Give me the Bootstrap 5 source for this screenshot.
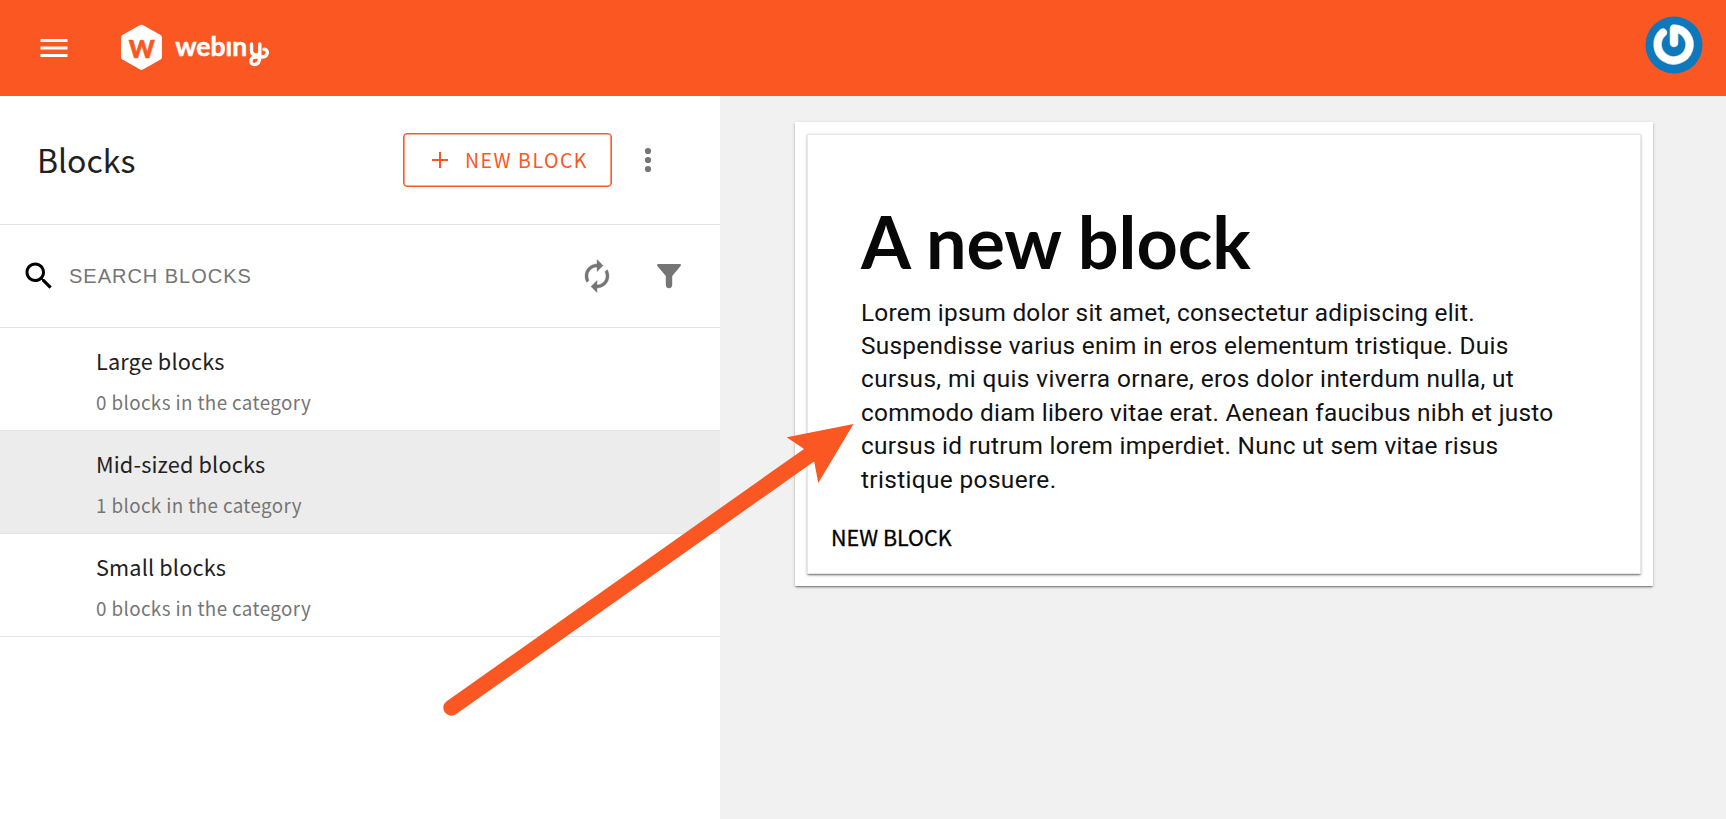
<!DOCTYPE html>
<html lang="en">
<head>
<meta charset="utf-8">
<title>Blocks</title>
<link href="https://cdn.jsdelivr.net/npm/bootstrap@5.3.0/dist/css/bootstrap.min.css" rel="stylesheet">
<style>
:root { --brand: #fa5723; }
body { font-family: "Noto Sans CJK SC", sans-serif; color: #222; overflow: hidden; }
svg { display: block; flex: none; }
.topbar { height: 96px; background: var(--brand); padding: 0 23px 0 36px; }
.brandmark { margin: -3px 0 0 48px; }
.avatar { margin-top: -6px; }
.sidebar { width: 720px; }
.line { border-bottom: 1px solid #e3e3e3; }
.side-head { height: 129px; padding: 0 54px 0 37px; }
.side-head h1 { font-size: 32px; line-height: 40px; color: #212121; padding-bottom: 2px; }
.btn-new { width: 209px; height: 54px; border: 1px solid var(--brand); box-shadow: inset 0 0 0 .6px var(--brand); border-radius: 4px; color: var(--brand); font-size: 19.5px; letter-spacing: 1.5px; line-height: 1; padding: 0 0 0 27px; }
.menu-dots { margin-left: 18px; }
.side-search { height: 103px; padding: 0 36px 0 21px; }
.side-search input { font: 20px "Liberation Sans", sans-serif; letter-spacing: .98px; width: 300px; outline: 0; margin-left: 12px; }
.side-search input::placeholder { color: #757575; opacity: 1; }
.funnel { margin-left: 39px; }
.cat { height: 103px; padding: 16px 0 0 96px; border-radius: 0; }
.cat.selected { background: #ececec; }
.cat-name { font-size: 21.7px; letter-spacing: .15px; line-height: 34px; color: #212121; }
.cat-sub { font-size: 18.8px; letter-spacing: .39px; line-height: 30px; color: #757575; margin-top: 9px; }
.preview { background: #f1f1f1; padding: 26px 73px 0 75px; }
.sheet, .sheet-inner { box-shadow: 0 2px 2px -1px rgba(0,0,0,.36), 0 1px 1px rgba(0,0,0,.16), 0 1px 4px rgba(0,0,0,.15); }
.sheet { background: #fff; padding: 12px; height: 464px; }
.sheet-inner { border: 1px solid #e6e6e6; height: 440px; padding: 64px 53px 0; }
.sheet h2 { font: 700 72px/84px Lato, sans-serif; letter-spacing: -.1px; color: #080808; margin: 0; white-space: nowrap; }
.lorem { font: 24.4px/33.4px Roboto, sans-serif; color: #111; margin: 12.6px 0 0; }
.lorem span { display: block; white-space: nowrap; }
.lorem span:nth-child(1) { letter-spacing: .235px; }
.lorem span:nth-child(2) { letter-spacing: .27px; }
.lorem span:nth-child(3) { letter-spacing: .375px; }
.lorem span:nth-child(4) { letter-spacing: .25px; }
.lorem span:nth-child(5) { letter-spacing: .28px; }
.lorem span:nth-child(6) { letter-spacing: .36px; }
.caption { font-size: 21.5px; line-height: 30px; color: #000; margin: 25.8px 0 0 -30px; -webkit-text-stroke: .3px #000; }
.pointer { position: absolute; left: 430px; top: 410px; pointer-events: none; }
</style>
<script src="https://cdn.jsdelivr.net/npm/bootstrap@5.3.0/dist/js/bootstrap.bundle.min.js"></script>
</head>
<body class="d-flex flex-column vh-100 position-relative">
<header class="topbar d-flex align-items-center">
  <svg width="36" height="36" viewBox="0 0 24 24" fill="#fff"><path d="M3 18h18v-2H3v2zm0-5h18v-2H3v2zm0-7v2h18V6H3z"/></svg>
  <svg class="brandmark" width="155" height="60" viewBox="120 16 155 60">
    <path d="M141.500 26.500L159.200 36.500V56L141.500 66.200L123.800 56V36.500z" fill="#fff" stroke="#fff" stroke-width="5.500" stroke-linejoin="round"/>
    <text x="128.800" y="56.600" textLength="26" lengthAdjust="spacingAndGlyphs" font-family="Lato" font-weight="900" font-size="24" fill="#fa5723" stroke="#fa5723" stroke-width=".6">W</text>
    <text x="175.300" y="55.300" textLength="72" lengthAdjust="spacingAndGlyphs" font-family="Lato" font-weight="700" font-size="27" fill="#fff" stroke="#fff" stroke-width=".5">webın</text>
    <path d="M251.500 43v6.500q0 4.500 4.300 4.500t4-4V43v12c0 5-1.500 8.500-5.300 8.500c-5.500 0-4.500-7.500 1.500-7.500h5.500c7 0 7.500-7.800 2.500-7.800" fill="none" stroke="#fff" stroke-width="3.400" stroke-linecap="round" stroke-linejoin="round"/>
  </svg>
  <svg class="avatar ms-auto" width="58" height="58" viewBox="-29 -29 58 58">
    <circle r="28.500" fill="#0e78bd"/>
    <path d="M-11-12.500A16 16 0 1 0 0-16.500V-2" fill="none" stroke="#d9dcde" stroke-width="8.600" stroke-linecap="round" stroke-linejoin="round"/>
    <path d="M-11-12.500A16 16 0 1 0 0-16.500V-2" fill="none" stroke="#fff" stroke-width="7" stroke-linecap="round" stroke-linejoin="round"/>
  </svg>
</header>
<div class="d-flex flex-grow-1">
  <aside class="sidebar bg-white">
    <div class="side-head line d-flex align-items-center">
      <h1 class="m-0 fw-normal">Blocks</h1>
      <button class="btn btn-new ms-auto d-flex align-items-center">
        <svg width="18" height="18" viewBox="0 0 18 18" class="me-3"><path d="M9 1v16M1 9h16" stroke="#fa5723" stroke-width="2"/></svg><span>NEW BLOCK</span></button>
      <svg class="menu-dots" width="36" height="36" viewBox="0 0 36 36" fill="#757575"><circle cx="18" cy="9" r="3.100"/><circle cx="18" cy="18" r="3.100"/><circle cx="18" cy="27" r="3.100"/></svg>
    </div>
    <div class="side-search line d-flex align-items-center">
      <svg width="36" height="36" viewBox="0 0 24 24"><path d="M15.500 14h-.79l-.28-.27C15.410 12.590 16 11.110 16 9.500 16 5.910 13.090 3 9.500 3S3 5.910 3 9.500 5.910 16 9.500 16c1.610 0 3.090-.59 4.230-1.570l.27.28v.79l5 4.990L20.490 19l-4.990-5zm-6 0C7.010 14 5 11.990 5 9.500S7.010 5 9.500 5 14 7.010 14 9.500 11.990 14 9.500 14z"/></svg>
      <input class="border-0 bg-transparent p-0" placeholder="SEARCH BLOCKS">
      <svg class="ms-auto" width="36" height="36" viewBox="0 0 24 24" fill="#757575" stroke="#757575" stroke-width=".25"><path d="M12 6v3l4-4-4-4v3c-4.420 0-8 3.580-8 8 0 1.570.46 3.030 1.240 4.260L6.700 14.800c-.45-.83-.7-1.790-.7-2.800 0-3.310 2.690-6 6-6zm6.760 1.740L17.300 9.200c.44.84.7 1.790.7 2.800 0 3.310-2.690 6-6 6v-3l-4 4 4 4v-3c4.420 0 8-3.580 8-8 0-1.570-.46-3.030-1.240-4.260z"/></svg>
      <svg class="funnel" width="30" height="30" viewBox="0 0 30 30" fill="#757575"><path d="M4 3h22q1.500.3.800 1.700L18.200 15v9.200q-.4 3-3.200 3t-3.200-3V15L3.200 4.700Q2.500 3.300 4 3z"/></svg>
    </div>
    <div class="cat line"><div class="cat-name">Large blocks</div><div class="cat-sub">0 blocks in the category</div></div>
    <div class="cat line selected"><div class="cat-name">Mid-sized blocks</div><div class="cat-sub">1 block in the category</div></div>
    <div class="cat line"><div class="cat-name">Small blocks</div><div class="cat-sub">0 blocks in the category</div></div>
  </aside>
  <main class="preview flex-grow-1">
    <div class="sheet"><div class="sheet-inner">
      <h2>A new block</h2>
      <p class="lorem"><span>Lorem ipsum dolor sit amet, consectetur adipiscing elit. </span><span>Suspendisse varius enim in eros elementum tristique. Duis </span><span>cursus, mi quis viverra ornare, eros dolor interdum nulla, ut </span><span>commodo diam libero vitae erat. Aenean faucibus nibh et justo </span><span>cursus id rutrum lorem imperdiet. Nunc ut sem vitae risus </span><span>tristique posuere.</span></p>
      <div class="caption">NEW BLOCK</div>
    </div></div>
  </main>
</div>
<svg class="pointer" width="430" height="315" viewBox="430 410 430 315" fill="#fa5723">
  <path d="M451.300 707.700L815 451" stroke="#fa5723" stroke-width="16" stroke-linecap="round"/>
  <path d="M853.500 424L786.700 437.300L804 449L814.300 462.300L818.300 483z"/>
</svg>
</body>
</html>
